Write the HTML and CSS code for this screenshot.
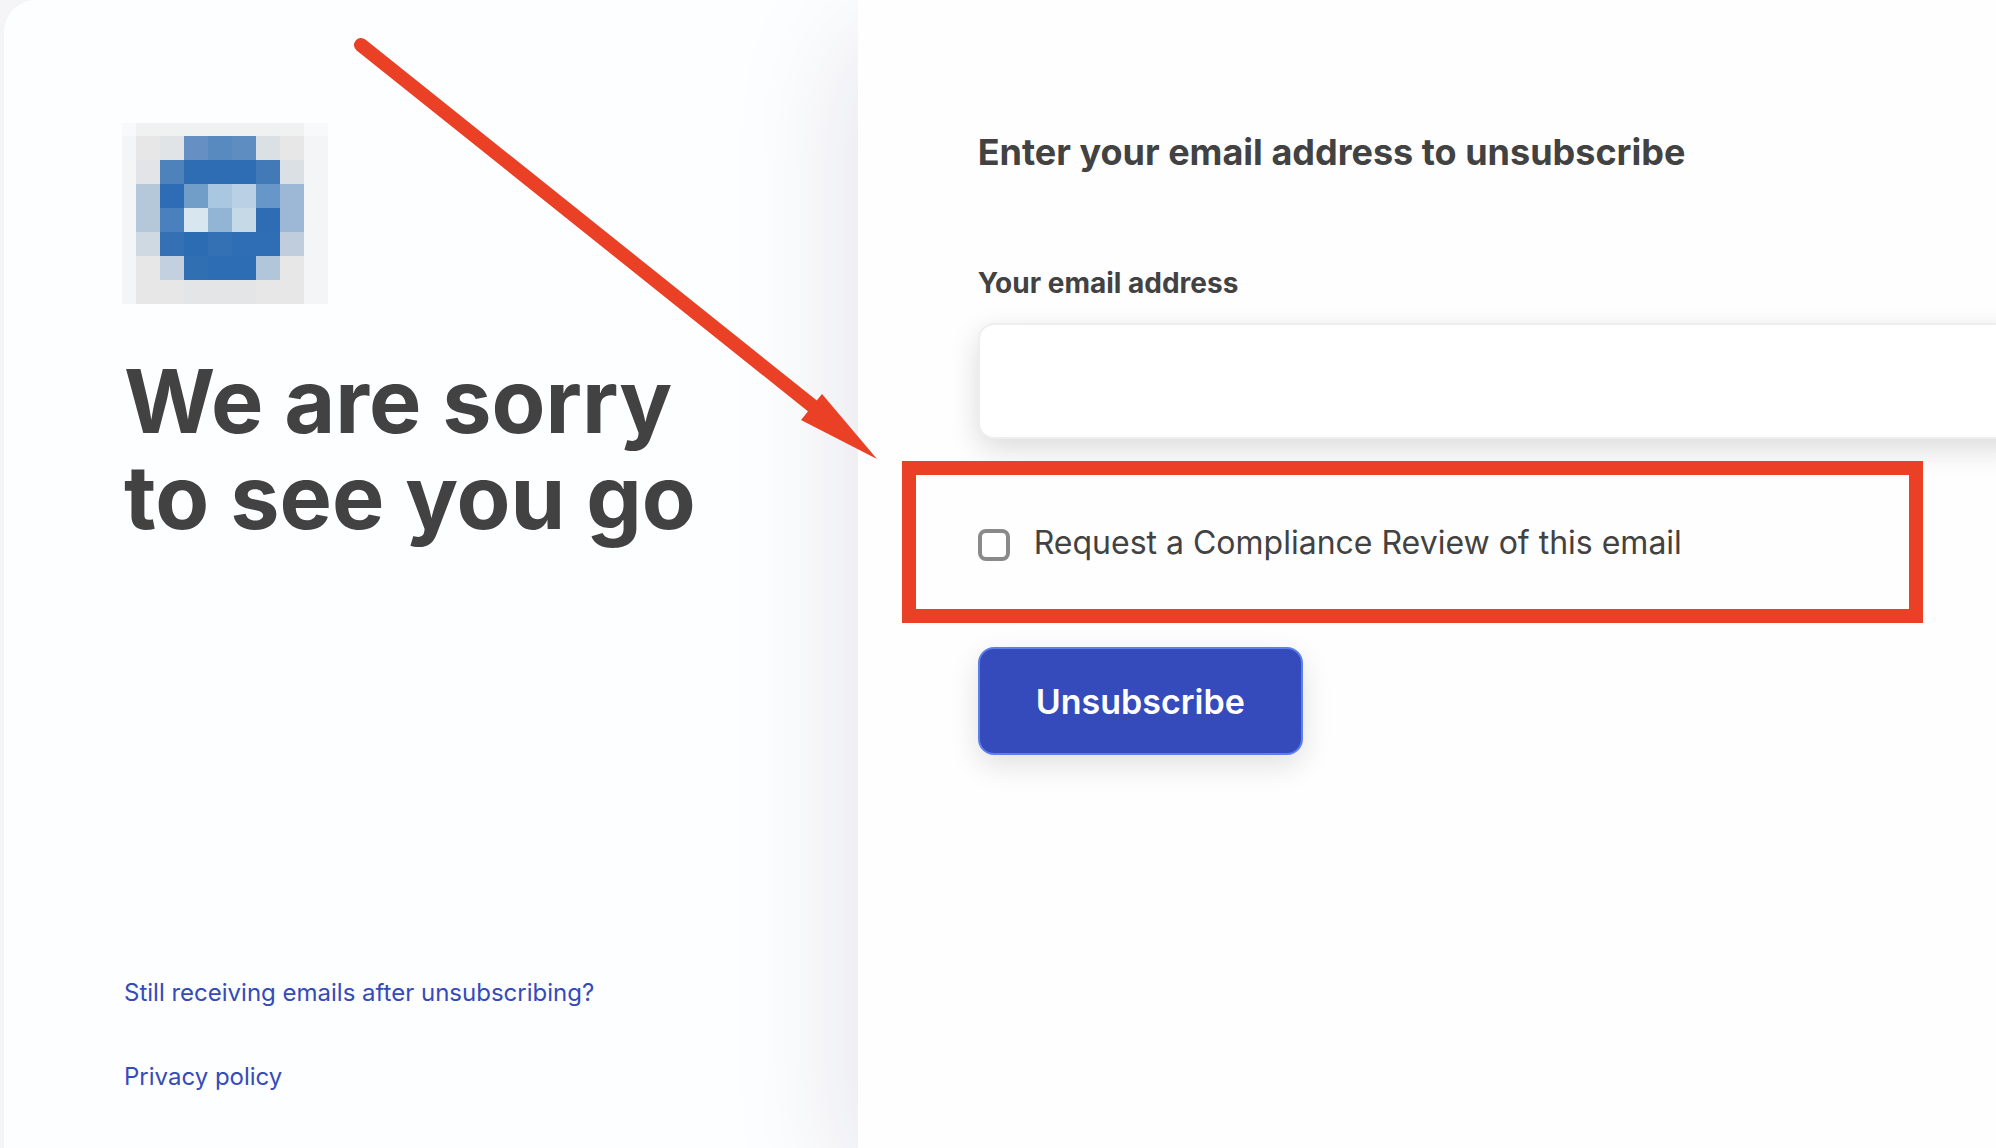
FILE: index.html
```html
<!DOCTYPE html>
<html lang="en">
<head>
  <meta charset="UTF-8">
  <meta name="viewport" content="width=device-width, initial-scale=1.0">
  <title>Unsubscribe</title>
  <link rel="stylesheet" href="styles.css">
</head>
<body>
  <div class="card">
    <!-- Left side: logo, message and links -->
    <aside class="intro">
      <svg class="logo" width="206" height="181" viewBox="0 0 206 181" shape-rendering="crispEdges" role="img" aria-label="Logo">
        <rect width="206" height="181" fill="#f4f5f7"/>
        <rect width="206" height="13" fill="#f8f9fb"/>
        <rect x="14" width="168" height="13" fill="#f0f2f1"/>
        <rect x="14" y="13" width="168" height="168" fill="#e7e7e7"/>
        <g transform="translate(14 13)">
          <rect x="24" width="24" height="24" fill="#e0e4e7"/>
          <rect x="48" width="24" height="24" fill="#668fc3"/>
          <rect x="72" width="24" height="24" fill="#588ac0"/>
          <rect x="96" width="24" height="24" fill="#5e8dc1"/>
          <rect x="120" width="24" height="24" fill="#dbe0e5"/>
          <rect y="24" width="24" height="24" fill="#e2e4e8"/>
          <rect x="24" y="24" width="24" height="24" fill="#4e82bb"/>
          <rect x="48" y="24" width="72" height="24" fill="#2e6db4"/>
          <rect x="120" y="24" width="24" height="24" fill="#427ab8"/>
          <rect x="144" y="24" width="24" height="24" fill="#dbe0e4"/>
          <rect y="48" width="24" height="48" fill="#b5c8da"/>
          <rect x="24" y="48" width="24" height="24" fill="#2e6db5"/>
          <rect x="48" y="48" width="24" height="24" fill="#719dc9"/>
          <rect x="72" y="48" width="24" height="24" fill="#a9c7e0"/>
          <rect x="96" y="48" width="24" height="24" fill="#bad0e4"/>
          <rect x="120" y="48" width="24" height="24" fill="#6797c9"/>
          <rect x="144" y="48" width="24" height="48" fill="#9db7d6"/>
          <rect x="24" y="72" width="24" height="24" fill="#4a80bd"/>
          <rect x="48" y="72" width="24" height="24" fill="#d8e6ef"/>
          <rect x="72" y="72" width="24" height="24" fill="#93b5d5"/>
          <rect x="96" y="72" width="24" height="24" fill="#c5d9e7"/>
          <rect x="120" y="72" width="24" height="24" fill="#2e6db4"/>
          <rect y="96" width="24" height="24" fill="#cfd9e1"/>
          <rect x="24" y="96" width="24" height="24" fill="#3570b4"/>
          <rect x="48" y="96" width="24" height="24" fill="#2c6cb3"/>
          <rect x="72" y="96" width="24" height="24" fill="#3370b4"/>
          <rect x="96" y="96" width="48" height="24" fill="#2f6db4"/>
          <rect x="144" y="96" width="24" height="24" fill="#c0cddc"/>
          <rect x="24" y="120" width="24" height="24" fill="#c3d0df"/>
          <rect x="48" y="120" width="24" height="24" fill="#316fb3"/>
          <rect x="72" y="120" width="48" height="24" fill="#2d6db3"/>
          <rect x="120" y="120" width="24" height="24" fill="#b1c5db"/>
          <rect x="48" y="144" width="72" height="24" fill="#e4e5e7"/>
        </g>
      </svg>
      <h1>We are sorry<br>to see you go</h1>
      <nav class="links">
        <a href="#">Still receiving emails after unsubscribing?</a>
        <a href="#">Privacy policy</a>
      </nav>
    </aside>

    <!-- Right side: unsubscribe form -->
    <main class="panel">
      <form class="form">
        <h2>Enter your email address to unsubscribe</h2>
        <label class="field-label" for="email">Your email address</label>
        <input class="field" type="email" id="email">
        <div class="review">
          <input class="review-box" type="checkbox" id="review">
          <label for="review">Request a Compliance Review of this email</label>
          <div class="highlight"></div>
        </div>
        <button class="submit" type="submit">Unsubscribe</button>
      </form>
    </main>

    <!-- Arrow pointing at the compliance option -->
    <svg class="arrow" width="530" height="430" viewBox="0 0 530 430" aria-hidden="true">
      <line x1="10" y1="10" x2="464" y2="373" stroke="#ea4025" stroke-width="14" stroke-linecap="round"/>
      <path d="M471 359 L526 424 L450 385 Z" fill="#ea4025"/>
    </svg>
  </div>
</body>
</html>
```
FILE: styles.css
```css
* {
  box-sizing: border-box;
}

body {
  margin: 0;
  background-color: #f5f5f8;
  color: #424242;
  font-family: Inter, "Liberation Sans", sans-serif;
}

.card {
  position: relative;
  display: grid;
  grid-template-columns: minmax(0, 3fr) minmax(0, 4fr);
  min-height: 100vh;
  margin-left: 4px;
  background-color: #fdfeff;
  border-radius: 32px 0 0 0;
  overflow: hidden;
}

.intro {
  display: flex;
  flex-direction: column;
  padding: 123px 0 53px 120px;
}

.logo {
  margin-left: -2px;
}

h1 {
  margin: 49px 0 0;
  font-size: 88px;
  line-height: 96px;
  font-weight: 700;
}

.links {
  display: flex;
  flex-direction: column;
  align-items: flex-start;
  gap: 48px;
  margin-top: auto;
}

.links a {
  color: #354bbb;
  font-size: 24px;
  line-height: 36px;
  text-decoration: none;
}

.panel {
  padding: 128px 0 53px 120px;
  background-color: #fefefe;
  box-shadow: 0 40px 120px rgba(40, 20, 80, 0.13);
}

/* the field runs past the right edge of the card */
.form {
  margin-right: -40px;
}

h2 {
  margin: 0 0 89px;
  font-size: 36px;
  line-height: 48px;
  font-weight: 700;
}

.field-label {
  display: block;
  margin-bottom: 22px;
  font-size: 28px;
  line-height: 36px;
  font-weight: 700;
}

.field {
  display: block;
  width: 100%;
  height: 116px;
  padding: 0 32px;
  border: 2px solid #eeeeee;
  border-radius: 16px;
  background-color: #fff;
  box-shadow: 0 10px 30px rgba(0, 0, 0, 0.14);
  font: inherit;
  font-size: 32px;
}

.review {
  position: relative;
  display: flex;
  align-items: flex-start;
  gap: 24px;
  margin: 80px 0;
  font-size: 32px;
  line-height: 48px;
}

.review-box {
  appearance: none;
  width: 32px;
  height: 32px;
  margin: 10px 0 0;
  border: 4px solid #8a8a8a;
  border-radius: 8px;
  background-color: #fff;
}

.review-box:checked {
  background-color: #354bbb;
}

.highlight {
  position: absolute;
  top: -58px;
  bottom: -56px;
  left: -76px;
  right: 113px;
  border: 14px solid #ea4025;
  pointer-events: none;
}

.submit {
  height: 108px;
  padding: 0 56px;
  border: 2px solid #5b80ee;
  border-radius: 16px;
  background-color: #354bbb;
  box-shadow: 0 10px 30px rgba(0, 0, 0, 0.12);
  color: #fff;
  font: inherit;
  font-size: 34px;
  font-weight: 600;
  cursor: pointer;
}

.arrow {
  position: absolute;
  top: 35px;
  left: 347px;
  pointer-events: none;
}
```
